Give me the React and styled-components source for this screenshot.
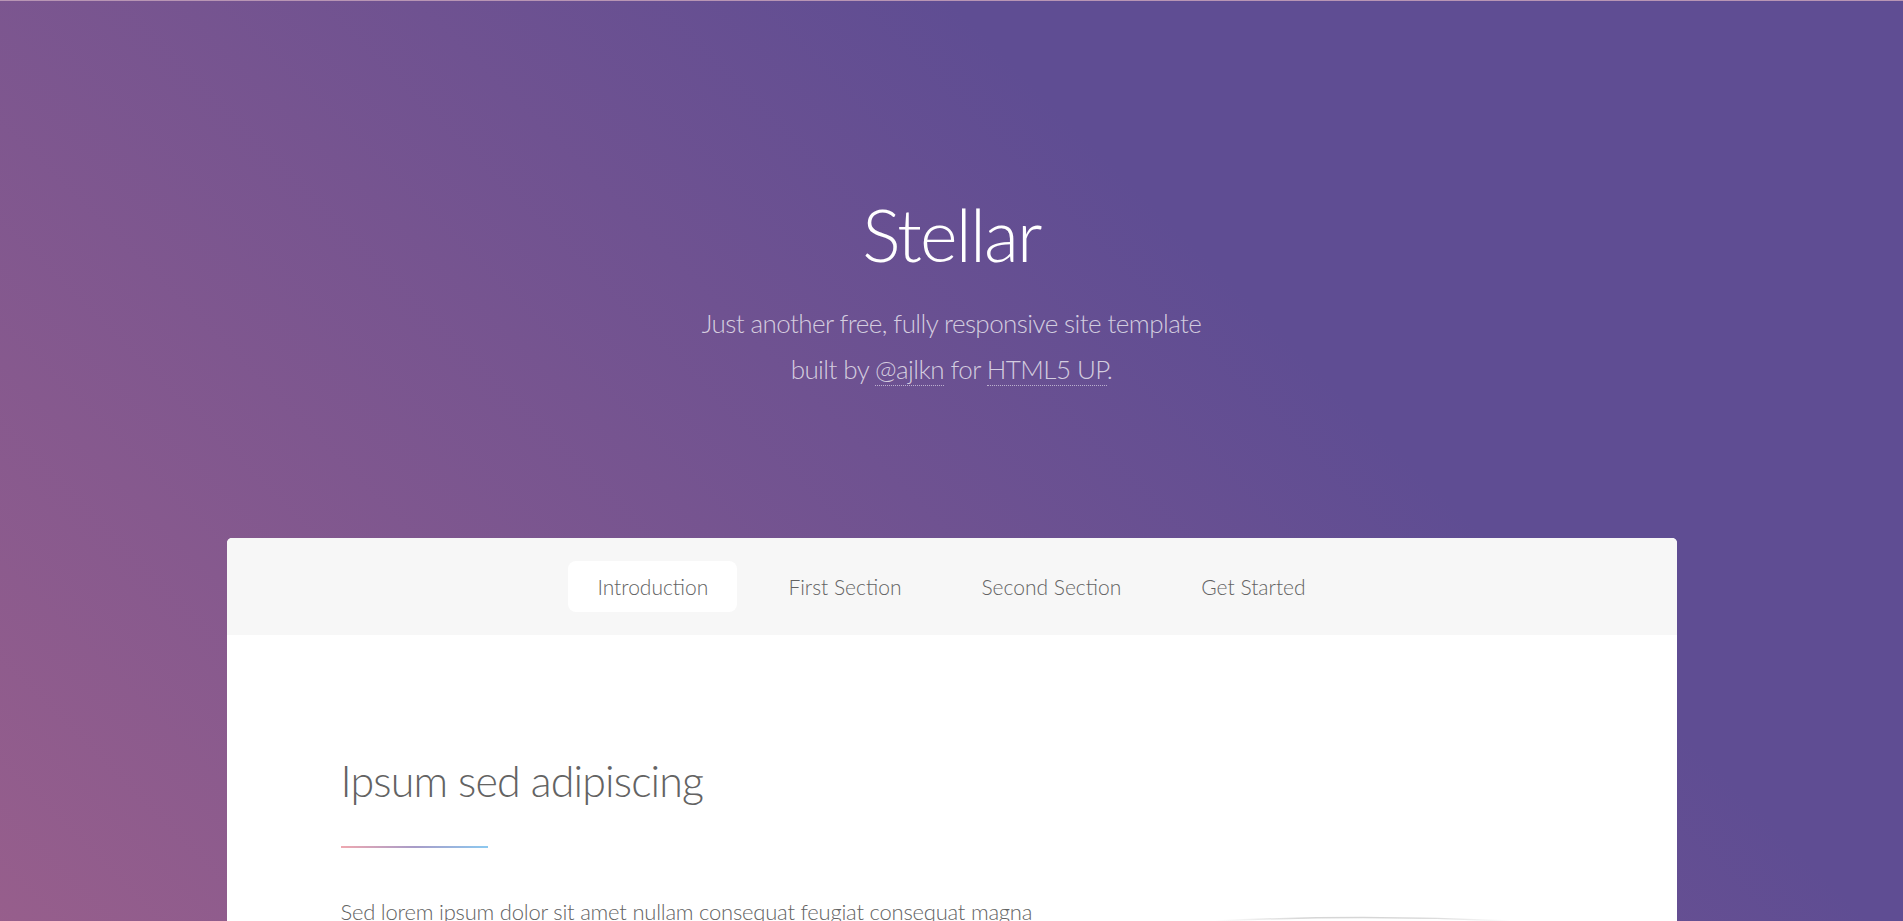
import React from "react";
import styled, { createGlobalStyle } from "styled-components";

const GlobalStyle = createGlobalStyle`
  html, body {
    margin: 0;
    padding: 0;
    overflow: hidden;
  }
  body {
    font-family: "Lato", "Open Sans", sans-serif;
    font-weight: 300;
    color: #636363;
  }
  * {
    box-sizing: border-box;
  }
`;

const Page = styled.div`
  min-height: 100vh;
  background-color: #935d8c;
  background-image: linear-gradient(45deg, #e37682 15%, #5f4d93 85%);
  background-size: 100% 4440px;
  background-repeat: no-repeat;
  border-top: 1px solid rgba(255, 255, 255, 0.35);
`;

const Header = styled.header`
  padding: 187px 4em 146px 4em;
  text-align: center;
  color: #ffffff;
`;

const Title = styled.h1`
  margin: 0 0 18px 0;
  font-size: 72px;
  font-weight: 300;
  line-height: 1.3;
  letter-spacing: -0.025em;
`;

const Tagline = styled.p`
  margin: 0;
  font-size: 26px;
  line-height: 46px;
  letter-spacing: -0.022em;
  color: rgba(255, 255, 255, 0.72);
`;

const TagLink = styled.a`
  color: inherit;
  text-decoration: none;
  border-bottom: dotted 1px rgba(255, 255, 255, 0.55);
`;

const Wrapper = styled.div`
  width: 1450px;
  max-width: calc(100% - 4em);
  margin: 0 auto;
  border-radius: 5px;
  overflow: hidden;
  background: #ffffff;
`;

const Nav = styled.nav`
  background: #f7f7f7;
  padding: 23px 0;
`;

const NavList = styled.ul`
  list-style: none;
  margin: 0;
  padding: 0;
  display: flex;
  justify-content: center;
`;

const NavItem = styled.li`
  padding: 0 11px;
`;

const NavLink = styled.a`
  display: inline-block;
  height: 51px;
  line-height: 51px;
  padding: 0 29px;
  border-radius: 8px;
  font-size: 21px;
  color: #636363;
  text-decoration: none;
  background: ${(p) => (p.$active ? "#ffffff" : "transparent")};
`;

const Main = styled.div`
  padding: 114px 114px 68px 114px;
`;

const Spotlight = styled.section`
  display: flex;
  align-items: flex-start;
`;

const Content = styled.div`
  flex: 1;
`;

const SectionTitle = styled.h2`
  margin: 0;
  font-size: 43px;
  font-weight: 300;
  line-height: 1.5;
  letter-spacing: -0.02em;
  color: #636363;

  &:after {
    content: "";
    display: block;
    width: 147px;
    height: 2px;
    margin-top: 33px;
    background-image: linear-gradient(90deg, #efa8b0, #a89cc8, #8cc9f0);
  }
`;

const Text = styled.p`
  margin: 46px 0 0 0;
  font-size: 22px;
  line-height: 1.65;
  letter-spacing: -0.01em;
`;

const ImageSlot = styled.span`
  display: block;
  width: 400px;
  margin-left: 90px;
  padding-top: 166px;
`;

const Arc = () => (
  <svg width="300" height="8" viewBox="0 0 300 8" style={{ display: "block", margin: "0 auto" }}>
    <defs>
      <linearGradient id="arcFade" x1="0" x2="1" y1="0" y2="0">
        <stop offset="0" stopColor="#d6d6d6" stopOpacity="0" />
        <stop offset="0.3" stopColor="#d6d6d6" />
        <stop offset="0.7" stopColor="#d6d6d6" />
        <stop offset="1" stopColor="#d6d6d6" stopOpacity="0" />
      </linearGradient>
    </defs>
    <path d="M2 6 Q150 -1 298 6" fill="none" stroke="url(#arcFade)" strokeWidth="1.5" />
  </svg>
);

const navItems = ["Introduction", "First Section", "Second Section", "Get Started"];

export default function App() {
  return (
    <Page>
      <GlobalStyle />
      <Header>
        <Title>Stellar</Title>
        <Tagline>
          Just another free, fully responsive site template
          <br />
          built by <TagLink href="#">@ajlkn</TagLink> for <TagLink href="#">HTML5 UP</TagLink>.
        </Tagline>
      </Header>

      <Wrapper>
        <Nav>
          <NavList>
            {navItems.map((item, i) => (
              <NavItem key={item}>
                <NavLink href="#" $active={i === 0}>
                  {item}
                </NavLink>
              </NavItem>
            ))}
          </NavList>
        </Nav>

        <Main>
          <Spotlight>
            <Content>
              <SectionTitle>Ipsum sed adipiscing</SectionTitle>
              <Text>
                Sed lorem ipsum dolor sit amet nullam consequat feugiat consequat magna
                adipiscing magna etiam amet veroeros. Lorem ipsum dolor tempus sit cursus.
                Tempus nisl et nullam lorem ipsum dolor sit amet aliquam.
              </Text>
            </Content>
            <ImageSlot>
              <Arc />
            </ImageSlot>
          </Spotlight>
        </Main>
      </Wrapper>
    </Page>
  );
}
